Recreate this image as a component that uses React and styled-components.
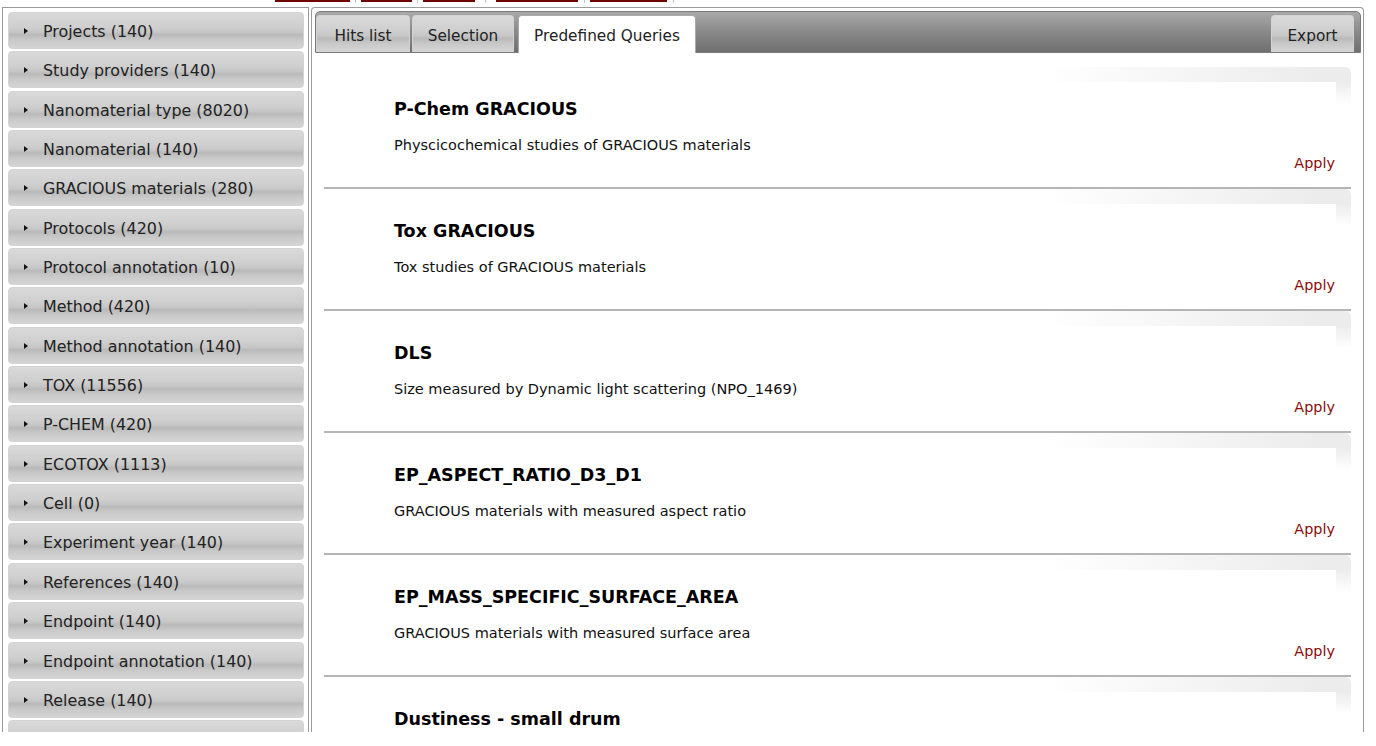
import React from "react";
import styled, { createGlobalStyle } from "styled-components";

const GlobalStyle = createGlobalStyle`
  html, body {
    margin: 0;
    padding: 0;
    background: #fff;
  }
  body {
    font-family: "DejaVu Sans", Verdana, sans-serif;
    color: #222;
  }
`;

const Page = styled.div`
  height: 732px;
  overflow: hidden;
  display: flex;
  flex-direction: column;
`;

const Nav = styled.div`
  display: flex;
  align-items: flex-start;
  height: 7px;
  padding-left: 275px;
  flex-shrink: 0;
`;

const NavBar = styled.div`
  width: ${(p) => p.$w}px;
  height: 2px;
  background: #6e0606;
`;

const NavGap = styled.div`
  width: ${(p) => p.$w}px;
  display: flex;
  justify-content: center;

  &::after {
    content: "";
    width: 1px;
    height: 3px;
    background: #b8c4d8;
  }
`;

const Main = styled.div`
  display: flex;
  align-items: flex-start;
  gap: 2px;
  padding-left: 2px;
`;

const LeftPanel = styled.div`
  width: 307px;
  box-sizing: border-box;
  border: 1px solid #9a9a9a;
  border-bottom: none;
  padding: 4px 4px 0 5px;
  display: flex;
  flex-direction: column;
  gap: 2.35px;
`;

const FacetHeader = styled.div`
  flex-shrink: 0;
  height: 37px;
  box-sizing: border-box;
  display: flex;
  align-items: center;
  border: 1px solid #d3d3d3;
  border-radius: 4px;
  background: linear-gradient(
    to bottom,
    #d9d9d9 0%,
    #cfcfcf 40%,
    #c6c6c6 55%,
    #b9b9b9 62%,
    #c9c9c9 78%,
    #d4d4d4 100%
  );
  color: #222;
  font-size: 15.9px;
  padding: 2px 0 0 15px;
`;

const Caret = styled.span`
  width: 0;
  height: 0;
  border-top: 3.5px solid transparent;
  border-bottom: 3.5px solid transparent;
  border-left: 4px solid #111;
  margin: -1px 15px 0 0;
`;

const RightPanel = styled.div`
  width: 1053px;
  box-sizing: border-box;
  border: 1px solid #9a9a9a;
  border-bottom: none;
  border-radius: 4px 4px 0 0;
  padding: 3px 2px 0 3px;
  display: flex;
  flex-direction: column;
`;

const TabBar = styled.div`
  flex-shrink: 0;
  height: 42px;
  box-sizing: border-box;
  display: flex;
  align-items: flex-end;
  padding: 0 6px 0 0;
  border: 1px solid #7a7a7a;
  border-radius: 5px 5px 0 0;
  background: linear-gradient(to bottom, #a9a9a9 0%, #8c8c8c 45%, #6f6f6f 100%);
`;

const Tab = styled.div`
  width: ${(p) => p.$w}px;
  height: ${(p) => (p.$active ? 38 : 37)}px;
  margin-bottom: ${(p) => (p.$active ? -1 : 0)}px;
  margin-right: ${(p) => p.$gap ?? 2}px;
  box-sizing: border-box;
  display: flex;
  align-items: center;
  justify-content: center;
  padding-top: 3px;
  font-size: 15.3px;
  color: #222;
  border: 1px solid ${(p) => (p.$active ? "#aaa" : "#d3d3d3")};
  border-bottom: none;
  border-radius: 4px 4px 0 0;
  margin-left: ${(p) => (p.$push ? "auto" : "0")};
  background: ${(p) =>
    p.$active
      ? "#fff"
      : "linear-gradient(to bottom, #d9d9d9 0%, #cfcfcf 40%, #c6c6c6 55%, #b9b9b9 62%, #c9c9c9 78%, #d4d4d4 100%)"};
`;

const QueryList = styled.div`
  flex-shrink: 0;
  padding: 14px 10px 0 9px;
  display: flex;
  flex-direction: column;
`;

const Query = styled.div`
  flex-shrink: 0;
  height: 122px;
  box-sizing: border-box;
  padding: 33px 16px 0 70px;
  border-bottom: 2px solid #b5b5b5;
  border-top-right-radius: 6px;
  display: flex;
  flex-direction: column;
  background:
    linear-gradient(to bottom, #ececec, rgba(255, 255, 255, 0)) right 15px / 15px 22px no-repeat,
    linear-gradient(to right, rgba(236, 236, 236, 0) 70%, #ececec 97%) top left / 100% 15px no-repeat,
    #fff;
`;

const QueryTitle = styled.div`
  font-size: 17.5px;
  font-weight: bold;
  line-height: 19px;
  color: #000;
`;

const QueryText = styled.div`
  margin-top: 18px;
  font-size: 14.5px;
  line-height: 17px;
  color: #111;
`;

const Apply = styled.a`
  align-self: flex-end;
  margin-top: 1px;
  font-size: 14.4px;
  line-height: 17px;
  color: #8b0a0a;
  cursor: pointer;
`;

const navBars = [
  [75, 11],
  [51, 11],
  [52, 21],
  [82, 12],
  [77, 12],
];

const facets = [
  "Projects (140)",
  "Study providers (140)",
  "Nanomaterial type (8020)",
  "Nanomaterial (140)",
  "GRACIOUS materials (280)",
  "Protocols (420)",
  "Protocol annotation (10)",
  "Method (420)",
  "Method annotation (140)",
  "TOX (11556)",
  "P-CHEM (420)",
  "ECOTOX (1113)",
  "Cell (0)",
  "Experiment year (140)",
  "References (140)",
  "Endpoint (140)",
  "Endpoint annotation (140)",
  "Release (140)",
  "",
];

const queries = [
  ["P-Chem GRACIOUS", "Physcicochemical studies of GRACIOUS materials"],
  ["Tox GRACIOUS", "Tox studies of GRACIOUS materials"],
  ["DLS", "Size measured by Dynamic light scattering (NPO_1469)"],
  ["EP_ASPECT_RATIO_D3_D1", "GRACIOUS materials with measured aspect ratio"],
  ["EP_MASS_SPECIFIC_SURFACE_AREA", "GRACIOUS materials with measured surface area"],
  ["Dustiness - small drum", null],
];

const App = () => {
  return (
    <>
      <GlobalStyle />
      <Page>
        <Nav>
          {navBars.map(([w, g], i) => (
            <React.Fragment key={i}>
              <NavBar $w={w} />
              <NavGap $w={g} />
            </React.Fragment>
          ))}
        </Nav>
        <Main>
          <LeftPanel>
            {facets.map((f, i) => (
              <FacetHeader key={i}>
                <Caret />
                {f}
              </FacetHeader>
            ))}
          </LeftPanel>
          <RightPanel>
            <TabBar>
              <Tab $w={94}>Hits list</Tab>
              <Tab $w={102} $gap={4}>Selection</Tab>
              <Tab $w={178} $active>Predefined Queries</Tab>
              <Tab $w={83} $push $gap={0}>Export</Tab>
            </TabBar>
            <QueryList>
              {queries.map(([title, text]) => (
                <Query key={title}>
                  <QueryTitle>{title}</QueryTitle>
                  {text && (
                    <>
                      <QueryText>{text}</QueryText>
                      <Apply>Apply</Apply>
                    </>
                  )}
                </Query>
              ))}
            </QueryList>
          </RightPanel>
        </Main>
      </Page>
    </>
  );
};

export default App;
